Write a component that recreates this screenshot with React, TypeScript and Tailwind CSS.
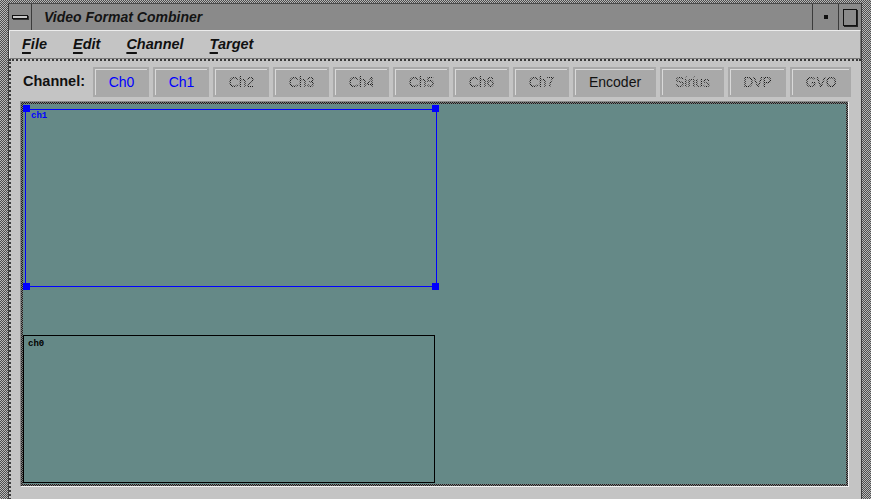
import React from "react";

type ChannelState = "active" | "enabled" | "disabled";

interface ChannelButton {
  label: string;
  state: ChannelState;
  width: string;
}

const channelButtons: ChannelButton[] = [
  { label: "Ch0", state: "active", width: "w-[56px]" },
  { label: "Ch1", state: "active", width: "w-[56px]" },
  { label: "Ch2", state: "disabled", width: "w-[56px]" },
  { label: "Ch3", state: "disabled", width: "w-[56px]" },
  { label: "Ch4", state: "disabled", width: "w-[56px]" },
  { label: "Ch5", state: "disabled", width: "w-[56px]" },
  { label: "Ch6", state: "disabled", width: "w-[56px]" },
  { label: "Ch7", state: "disabled", width: "w-[56px]" },
  { label: "Encoder", state: "enabled", width: "w-[83px]" },
  { label: "Sirius", state: "disabled", width: "w-[64px]" },
  { label: "DVP", state: "disabled", width: "w-[58px]" },
  { label: "GVO", state: "disabled", width: "w-[61px]" },
];

const menus = ["File", "Edit", "Channel", "Target"];

const stipple =
  "bg-[image:repeating-conic-gradient(#4e4e4e_0_25%,#b8b8b8_0_50%)] bg-[length:2px_2px]";

const Handle = ({ pos }: { pos: string }) => (
  <div className={`absolute w-[7px] h-[7px] bg-[#0000ff] ${pos}`} />
);

export default function App() {
  return (
    <div
      className={`w-[871px] h-[499px] overflow-hidden pt-[3px] pl-[8px] pr-[9px] ${stipple} font-['Liberation_Sans',Arial,sans-serif]`}
    >
      <div className="flex flex-col h-[520px] border-l border-r border-[#3c3c3c]">
        {/* title bar */}
        <div className="flex h-[27px] bg-[#8a8a8a] border-t border-[#4a4a4a] shrink-0">
          <div className="w-[23px] flex items-center justify-center border-r border-[#3c3c3c]">
            <div className="w-[16px] h-[4px] border border-[#111] bg-[#c8c8c8] shadow-[1px_1px_0_#333]" />
          </div>
          <div className="flex-1 flex items-center pl-[12px] italic font-bold text-[14px] text-[#141414]">
            Video Format Combiner
          </div>
          <div className="w-[26px] flex items-center justify-center border-l border-[#3c3c3c]">
            <div className="w-[4px] h-[4px] bg-[#111]" />
          </div>
          <div className="w-[23px] flex items-center justify-center border-l border-[#3c3c3c]">
            <div className="w-[14px] h-[17px] border border-[#111] bg-[#8a8a8a] shadow-[1px_1px_0_#222]" />
          </div>
        </div>

        {/* menu bar */}
        <div className="flex items-center h-[29px] shrink-0 gap-[26px] pl-[12px] bg-[#c4c4c4] border-t border-l border-[#ececec] border-b border-r border-b-[#7a7a7a] border-r-[#7a7a7a] italic font-bold text-[14.5px] text-[#111]">
          {menus.map((menu) => (
            <span key={menu}>
              <span className="underline decoration-2 underline-offset-[3px]">
                {menu[0]}
              </span>
              {menu.slice(1)}
            </span>
          ))}
        </div>

        {/* main area */}
        <div className="flex-1 bg-[#c4c4c4] border-t-2 border-l-2 border-dotted border-[#3a3a3a]">
          <div className="flex items-center pt-[6px] pl-[12px] gap-[4px]">
            <span className="font-bold text-[14.5px] text-[#111] mr-[4px]">
              Channel:
            </span>
            {channelButtons.map((btn) => (
              <div
                key={btn.label}
                className={`h-[30px] p-[2px] bg-[#a9a9a9] ${btn.width}`}
              >
                <div className="h-full flex items-center justify-center border-t border-l border-[#d9d9d9] text-[14px]">
                  {btn.state === "disabled" ? (
                    <span className="bg-[image:repeating-conic-gradient(#1a1a1a_0_25%,transparent_0_50%)] bg-[length:2px_2px] bg-clip-text text-transparent">
                      {btn.label}
                    </span>
                  ) : (
                    <span
                      className={
                        btn.state === "active" ? "text-[#0000ff]" : "text-[#111]"
                      }
                    >
                      {btn.label}
                    </span>
                  )}
                </div>
              </div>
            ))}
          </div>

          {/* canvas */}
          <div className="mt-[4px] ml-[9px] w-[829px] h-[386px] border-t border-l border-[#8c8c8c] border-b border-r border-b-[#f2f2f2] border-r-[#f2f2f2]">
            <div className="w-full h-full p-[2px] bg-[image:repeating-conic-gradient(#1e1e1e_0_25%,#7a7a7a_0_50%)] bg-[length:2px_2px]">
              <div className="relative w-full h-full bg-[#658987] overflow-hidden font-['Liberation_Mono',monospace] font-bold text-[9px] leading-none">
                {/* ch1 (selected) */}
                <div className="absolute left-[2px] top-[5px] w-[412px] h-[178px] border border-[#0000ff]">
                  <span className="absolute left-[5px] top-[2px] text-[#0000ff]">
                    ch1
                  </span>
                </div>
                <Handle pos="left-0 top-[1px]" />
                <Handle pos="left-[409px] top-[1px]" />
                <Handle pos="left-0 top-[179px]" />
                <Handle pos="left-[409px] top-[179px]" />

                {/* ch0 */}
                <div className="absolute left-0 top-[231px] w-[412px] h-[148px] border border-[#000]">
                  <span className="absolute left-[4px] top-[4px] text-[#000]">
                    ch0
                  </span>
                </div>
              </div>
            </div>
          </div>
        </div>
      </div>
    </div>
  );
}
